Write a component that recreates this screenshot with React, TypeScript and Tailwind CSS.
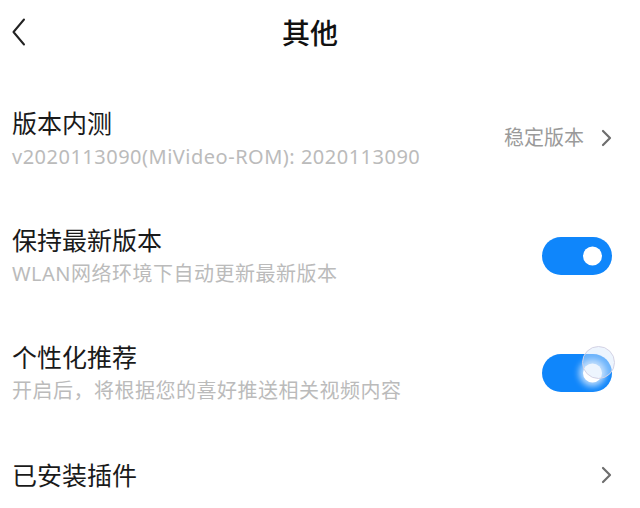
import React from "react";

const font = { fontFamily: '"Noto Sans", "Noto Sans CJK SC", sans-serif' };

function Chevron() {
  return (
    <svg width="12" height="18" viewBox="0 0 12 18" fill="none">
      <path d="M3 2l7 7-7 7" stroke="#6e6e6e" strokeWidth="2.2" strokeLinecap="round" strokeLinejoin="round" />
    </svg>
  );
}

function Toggle({ ripple }: { ripple?: boolean }) {
  return (
    <div className="relative w-[70px] h-[38px] rounded-full bg-[#0f86fb] shrink-0">
      <div
        className={`absolute right-[10px] top-1/2 -translate-y-1/2 w-[19px] h-[19px] rounded-full bg-white ${
          ripple ? "shadow-[0_0_6px_4px_rgba(200,225,252,0.9)]" : ""
        }`}
      />
      {ripple && (
        <div className="absolute left-[40px] top-[-8px] w-[33px] h-[33px] rounded-full bg-[#d6e8fc]/45 border-[1.5px] border-[#d4d2e4]" />
      )}
    </div>
  );
}

function Row({ title, sub, right, h = "h-[117px]" }: { title: string; sub?: string; right: React.ReactNode; h?: string }) {
  return (
    <div className={`flex items-center justify-between pl-[12px] pr-[28px] ${h}`}>
      <div className="flex flex-col">
        <div className="text-[25px] leading-[32px] text-[#1a1a1a]">{title}</div>
        {sub && <div className="text-[20px] leading-[28px] mt-[4px] tracking-[0.5px] text-[#bbbbbb]">{sub}</div>}
      </div>
      {right}
    </div>
  );
}

export default function App() {
  return (
    <div className="w-[640px] h-[508px] bg-white overflow-hidden" style={font}>
      <div className="relative h-[80px] flex justify-center pt-[16px] pr-[20px]">
        <div className="absolute left-[12px] top-[18px]">
          <svg width="14" height="28" viewBox="0 0 14 28" fill="none">
            <path d="M12 1.5L1.5 14 12 26.5" stroke="#222" strokeWidth="2" strokeLinecap="round" strokeLinejoin="round" />
          </svg>
        </div>
        <div className="text-[28px] font-medium text-[#111] leading-[34px]">其他</div>
      </div>
      <Row
        title="版本内测"
        sub="v2020113090(MiVideo-ROM): 2020113090"
        right={
          <div className="flex items-center gap-[16px] -mt-[2px]">
            <span className="text-[20px] text-[#9a9a9a]">稳定版本</span>
            <Chevron />
          </div>
        }
      />
      <Row title="保持最新版本" sub="WLAN网络环境下自动更新最新版本" right={<Toggle />} />
      <Row title="个性化推荐" sub="开启后，将根据您的喜好推送相关视频内容" right={<Toggle ripple />} />
      <Row title="已安装插件" h="h-[88px]" right={<Chevron />} />
    </div>
  );
}
